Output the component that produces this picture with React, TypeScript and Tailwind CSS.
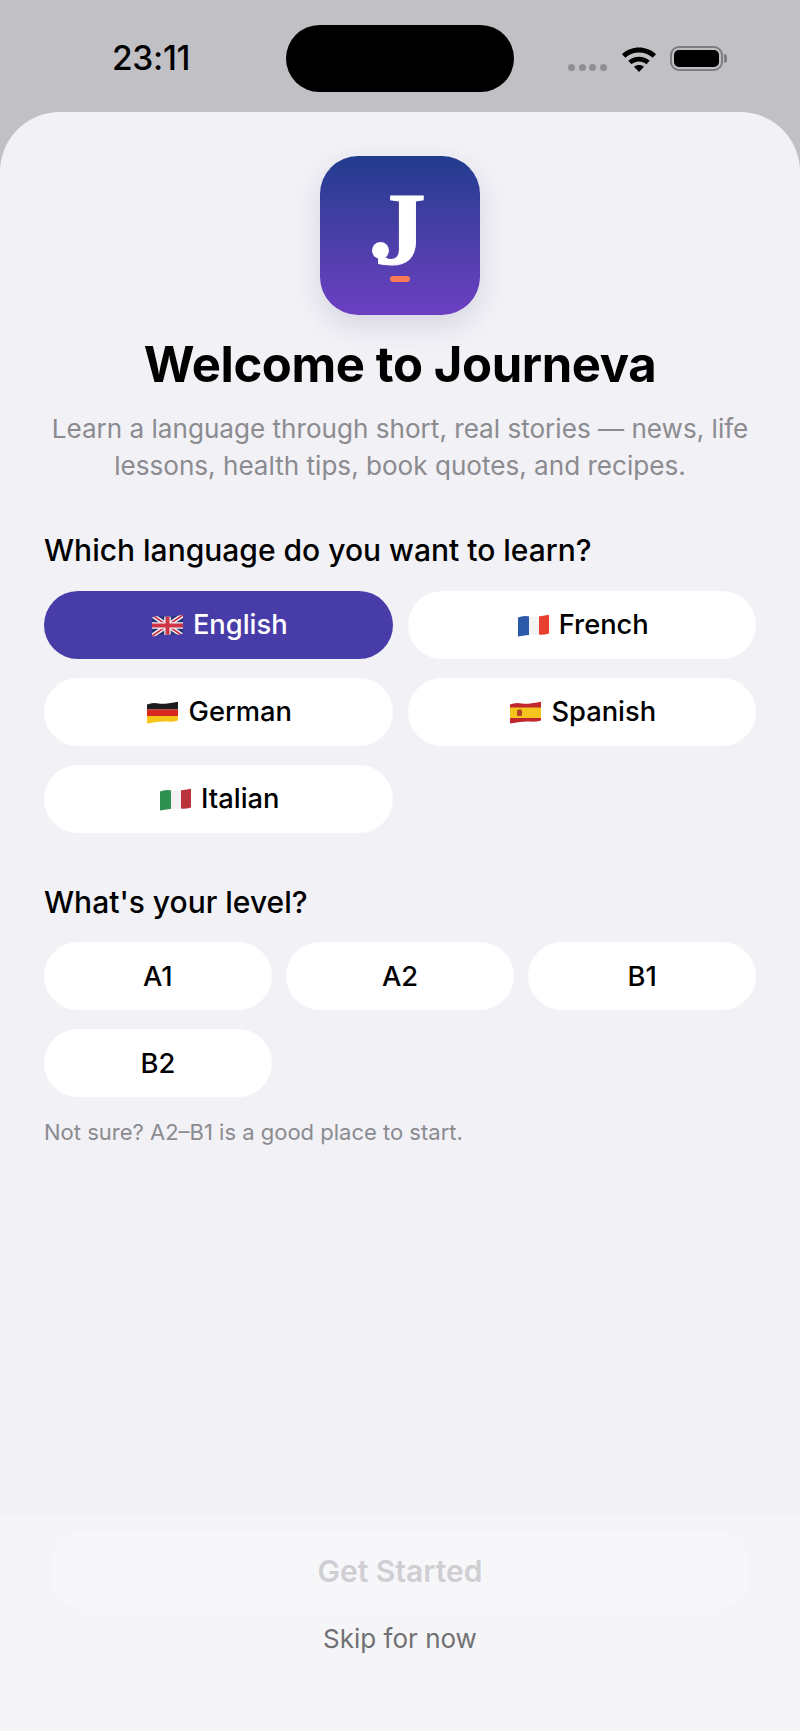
import type { ReactNode } from "react";

const languages = ["English", "French", "German", "Spanish", "Italian"];
const levels = ["A1", "A2", "B1", "B2"];

// Wavy flag outline shared by all flags
function Flag({ id, children }: { id: string; children: ReactNode }) {
  return (
    <svg width="31" height="23" viewBox="0 0 31 23" className="shrink-0">
      <defs>
        <clipPath id={`flag-${id}`}>
          <path d="M0 3.5Q5 1.2 10 2.2T20 2.6T31 .8V19.5Q26 21 20.5 20.6T10 21T0 22.5Z" />
        </clipPath>
      </defs>
      <g clipPath={`url(#flag-${id})`}>{children}</g>
    </svg>
  );
}

function FlagIcon({ name }: { name: string }) {
  if (name === "English") {
    return (
      <Flag id="uk">
        <rect width="31" height="23" fill="#27347a" />
        <path d="M0 1 31 22M31 1 0 22" stroke="#f2f2f4" strokeWidth="4.5" />
        <path d="M0 1 31 22M31 1 0 22" stroke="#cf3346" strokeWidth="1.8" />
        <path d="M15.5 0V23M0 11.5H31" stroke="#f2f2f4" strokeWidth="6.5" />
        <path d="M15.5 0V23M0 11.5H31" stroke="#cf3346" strokeWidth="4" />
      </Flag>
    );
  }
  if (name === "French") {
    return (
      <Flag id="fr">
        <rect width="11" height="23" fill="#2a5aa8" />
        <rect x="11" width="10" height="23" fill="#f4f4f6" />
        <rect x="21" width="10" height="23" fill="#e8402f" />
      </Flag>
    );
  }
  if (name === "German") {
    return (
      <Flag id="de">
        <rect width="31" height="8.5" fill="#1c1c1c" />
        <rect y="8.5" width="31" height="6.5" fill="#d6281f" />
        <rect y="15" width="31" height="8" fill="#f5c51c" />
      </Flag>
    );
  }
  if (name === "Spanish") {
    return (
      <Flag id="es">
        <rect width="31" height="23" fill="#c0282d" />
        <rect y="6.5" width="31" height="10.5" fill="#f6c61e" />
        <rect x="7" y="8.5" width="5" height="6.5" rx="1.5" fill="#b5452a" />
      </Flag>
    );
  }
  return (
    <Flag id="it">
      <rect width="11" height="23" fill="#2f9150" />
      <rect x="11" width="10" height="23" fill="#f2f2f2" />
      <rect x="21" width="10" height="23" fill="#b9323c" />
    </Flag>
  );
}

function WifiIcon() {
  return (
    <svg width="36" height="27" viewBox="0 0 36 27" className="shrink-0">
      <path d="M1 9.2C10.5.3 25.5.3 35 9.2L31.7 12.7C24 5.8 12 5.8 4.300 12.700Z" fill="#000" />
      <path d="M7.300 15.800C13.300 10.300 22.700 10.300 28.700 15.800L25.400 19.200C21 15.500 15 15.500 10.600 19.200Z" fill="#000" />
      <path d="M13 21.700C15.900 19.400 20.100 19.400 23 21.700L18 27Z" fill="#000" />
    </svg>
  );
}

function StatusBar() {
  return (
    <div className="flex h-[112px] shrink-0 pt-[25px]">
      <div className="flex h-[67px] w-[286px] items-center pl-[112px] text-[33.500px] font-[550] tracking-[-0.3px] text-black">
        23:11
      </div>
      <div className="h-[67px] w-[228px] rounded-[34px] bg-black" />
      <div className="flex h-[67px] flex-1 items-center pl-[54px]">
        <div className="mt-[18px] flex gap-[3.500px]">
          {[0, 1, 2, 3].map((dot) => (
            <span key={dot} className="h-[7px] w-[7px] rounded-full bg-[#8f8f94]" />
          ))}
        </div>
        <div className="ml-[14px]">
          <WifiIcon />
        </div>
        <div className="ml-[13px] flex items-center">
          <div className="flex h-[25px] w-[53px] items-center justify-center rounded-[9px] border-2 border-[#7d7d81]">
            <div className="h-[17px] w-[45px] rounded-[5px] bg-black" />
          </div>
          <div className="ml-[1px] h-[9px] w-[3px] rounded-r-full bg-[#7d7d81]" />
        </div>
      </div>
    </div>
  );
}

function Logo() {
  return (
    <div className="relative mx-auto flex h-[159px] w-[160px] flex-col items-center rounded-[38px] bg-gradient-to-b from-[#1f3b8e] to-[#6c3fc2] pt-[30px] shadow-[0_10px_28px_rgba(60,50,110,0.14)]">
      <span className="font-['Liberation_Serif'] text-[104px] leading-[85px] font-bold text-white [-webkit-text-stroke:1px_white]">
        J
      </span>
      {/* round terminal on the hook of the J */}
      <span className="absolute top-[86px] left-[52px] h-[17px] w-[17px] rounded-full bg-white" />
      <span className="mt-[5px] h-[6px] w-[20px] rounded-full bg-[#fb7a55]" />
    </div>
  );
}

export default function App() {
  return (
    <div className="flex h-[1731px] w-[800px] flex-col overflow-hidden bg-[#c1c0c5] font-['Inter',sans-serif] text-black">
      <StatusBar />

      <div className="relative flex flex-1 flex-col rounded-t-[60px] bg-[#f1f1f6]">
        <div className="flex-1 px-[44px] pt-[44px]">
          <Logo />

          <h1 className="mt-[21px] text-center text-[49px] leading-[58px] font-bold tracking-[-0.4px]">
            Welcome to Journeva
          </h1>
          <p className="mt-[17px] text-center text-[26.100px] leading-[36.500px] text-[#8b8b90]">
            Learn a language through short, real stories — news, life
            <br />
            lessons, health tips, book quotes, and recipes.
          </p>

          <h2 className="mt-[48px] text-[30px] leading-[36px] font-[550]">Which language do you want to learn?</h2>
          <div className="mt-[23px] grid grid-cols-2 gap-x-[15px] gap-y-[19px]">
            {languages.map((language) => {
              const active = language === "English";
              return (
                <button
                  key={language}
                  className={`flex h-[68px] items-center justify-center gap-[10px] rounded-[34px] pl-[3px] text-[27.300px] font-[550] ${
                    active ? "bg-[#483ca8] text-white" : "bg-white text-black"
                  }`}
                >
                  <FlagIcon name={language} />
                  {language}
                </button>
              );
            })}
          </div>

          <h2 className="mt-[51px] text-[30px] leading-[36px] font-[550]">What's your level?</h2>
          <div className="mt-[22px] grid grid-cols-3 gap-x-[14.500px] gap-y-[19px]">
            {levels.map((level) => (
              <button key={level} className="h-[68px] rounded-[34px] bg-white pt-[2px] text-[27.300px] font-[550]">
                {level}
              </button>
            ))}
          </div>
          <p className="mt-[21px] text-[22px] leading-[28px] text-[#8b8b90]">Not sure? A2–B1 is a good place to start.</p>
        </div>

        <div className="flex h-[215px] shrink-0 flex-col items-center bg-[#f5f5f8] pt-[16px]">
          <button className="h-[78px] w-[700px] rounded-[36px] bg-[#f7f7fa] text-[30px] font-semibold text-[#cfcfd3]">
            Get Started
          </button>
          <button className="mt-[11px] text-[26px] leading-[36px] text-[#707075]">Skip for now</button>
        </div>
      </div>
    </div>
  );
}
